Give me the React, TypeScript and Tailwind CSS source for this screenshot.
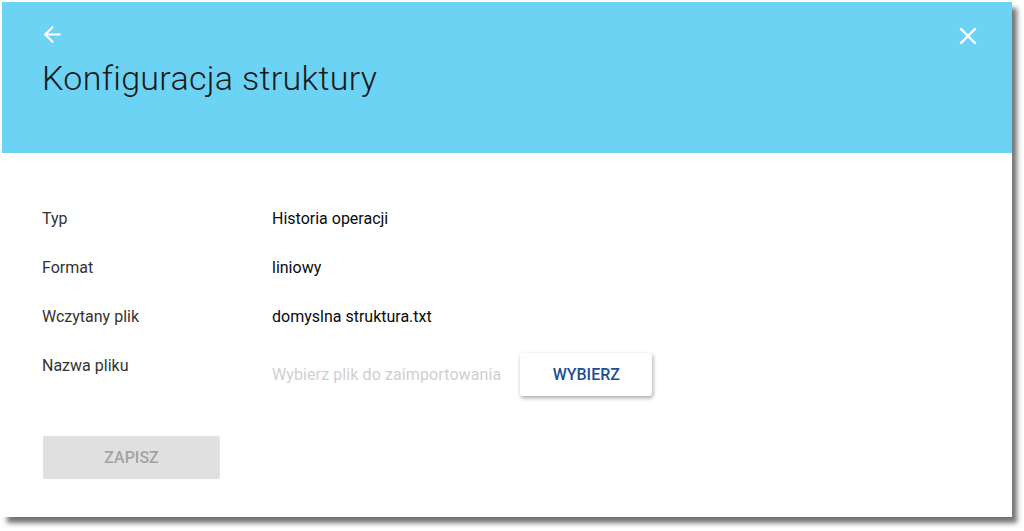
import { ArrowLeft, X } from "lucide-react";

const rows = [
  { label: "Typ", value: "Historia operacji" },
  { label: "Format", value: "liniowy" },
  { label: "Wczytany plik", value: "domyslna struktura.txt" },
];

export default function App() {
  return (
    <div className="w-[1024px] h-[531px] bg-white pt-[2px] pl-[2px] font-['Roboto',sans-serif]">
      <div className="w-[1010px] h-[515px] bg-white shadow-[5px_6px_5px_rgba(0,0,0,0.55)] flex flex-col">
        {/* Header */}
        <div className="h-[151px] bg-[#6dd3f5] pl-[38px] pr-[40px] pt-[20px] relative">
          <button className="text-white">
            <ArrowLeft size={25} strokeWidth={2} />
          </button>
          <h1 className="ml-[2px] mt-[7px] text-[34px] font-light text-[#1a1a1a] leading-none tracking-[0.3px]">
            Konfiguracja struktury
          </h1>
          <button className="absolute right-[30px] top-[20px] text-white">
            <X size={28} strokeWidth={2} />
          </button>
        </div>

        {/* Body */}
        <div className="px-[40px] pt-[54px]">
          {rows.map((r) => (
            <div key={r.label} className="flex h-[49px] text-[16px]">
              <div className="w-[230px] text-[#333]">{r.label}</div>
              <div className="text-[#0a0a0a]">{r.value}</div>
            </div>
          ))}
          <div className="flex text-[16px]">
            <div className="w-[230px] text-[#333]">Nazwa pliku</div>
            <div className="flex items-center gap-[19px] mt-[-1px]">
              <span className="text-[#cfcfcf] tracking-[0.1px]">Wybierz plik do zaimportowania</span>
              <button className="w-[132px] h-[43px] rounded-[3px] bg-white text-[#1c4f93] font-medium shadow-[1px_2px_4px_rgba(0,0,0,0.35)]">
                WYBIERZ
              </button>
            </div>
          </div>
          <button className="mt-[40px] ml-[1px] w-[177px] h-[43px] rounded-[2px] bg-[#e0e0e0] text-[#a3a3a3] font-medium text-[16px]">
            ZAPISZ
          </button>
        </div>
      </div>
    </div>
  );
}
